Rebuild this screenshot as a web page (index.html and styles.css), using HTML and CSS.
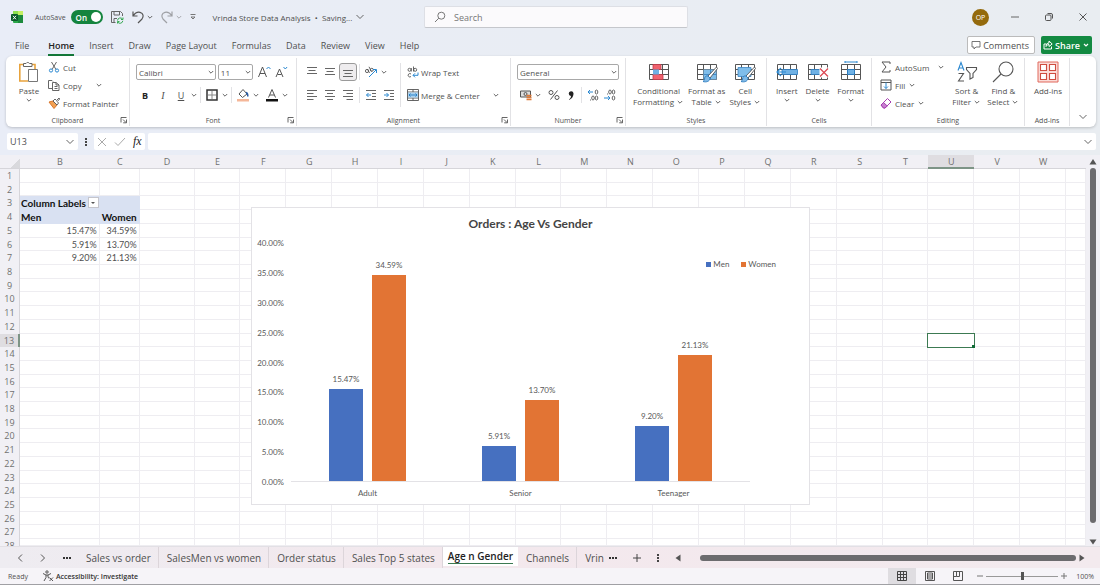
FILE: index.html
```html
<!DOCTYPE html>
<html lang="en">
<head>
  <meta charset="UTF-8" />
  <meta name="viewport" content="width=device-width, initial-scale=1.0"/>
  <title>Vrinda Store Data Analysis</title>
  <link rel="stylesheet" href="styles.css">
</head>
<body>
  <svg class="defs" aria-hidden="true">
    <symbol id="chev" viewBox="0 0 8 8"><path d="M1.8 3 4 5.2 6.2 3" fill="none" stroke="#666" stroke-width="1"/></symbol>
    <symbol id="chev-lg" viewBox="0 0 10 10"><path d="M1.5 3 5 6.5 8.5 3" fill="none" stroke="#666" stroke-width="1"/></symbol>
    <symbol id="launch" viewBox="0 0 8 8"><path d="M1 6.5V1.5H6.5M3 3.5 6 6.5M6.5 3.5V6.8H3.2" fill="none" stroke="#555" stroke-width=".9"/></symbol>
    <symbol id="tbl" viewBox="0 0 22 22"><path d="M1.5 3.5h19v15h-19zM1.5 8.5h19M1.5 13.5h19M7.5 3.5v15M14.5 3.5v15" fill="#fff" stroke="#555"/></symbol>
    <symbol id="brush" viewBox="0 0 22 22"><path d="M20.5 6 12 15l2 2 7.5-9.5z" fill="#fff" stroke="#555" stroke-width=".9"/><path d="M12 15c-2-.5-3.500 1-3.500 3 0 1.500-1 2-1.500 2.500 3 1 7 0 7-3.500z" fill="#7fb9e6" stroke="#2b7cc0" stroke-width=".9"/></symbol>
  </svg>

  <header class="titlebar">
    <div class="title-left">
      <svg class="logo" viewBox="0 0 12 12"><rect x="2" width="10" height="12" rx="1" fill="#2ba84a"/><path d="M2 0h5v4H2z" fill="#8be04e"/><path d="M7 0h5v4H7z" fill="#c3ef62"/><path d="M7 4h5v8H7z" fill="#1c8a3c"/><rect y="3" width="7" height="7" rx="1" fill="#0b5c2a"/><path d="m2 4.800 3 3.500M5 4.800 2 8.300" stroke="#fff" stroke-width="1"/></svg>
      <label class="autosave">AutoSave
        <span class="toggle"><input type="checkbox" checked><span>On</span></span>
      </label>
      <button class="tool" aria-label="Save"><svg width="14" height="14" viewBox="0 0 14 14"><path d="M12.500 6V3.500l-2-2h-9v11h4M4 1.500v3.500h5.500V1.500M4 12.500v-4h3" fill="none" stroke="#666"/><path d="M7.500 10.500a2.800 2.800 0 0 1 5-1.500M13 7.500v2h-2M12.800 10.800a2.800 2.800 0 0 1-5 1.400M7.500 13.500v-2h2" fill="none" stroke="#36a852"/></svg></button>
      <button class="tool undo" aria-label="Undo"><svg width="14" height="14" viewBox="0 0 14 14"><path d="M2 1.500V6h4.500M2.200 5.800C4 3 6.500 1.800 9 2.300c3.500.8 4 4.700 1.800 7L7 13" fill="none" stroke="#555" stroke-width="1.200"/></svg><svg width="8" height="8"><use href="#chev"/></svg></button>
      <button class="tool redo" aria-label="Redo"><svg width="14" height="14" viewBox="0 0 14 14"><path d="M12 1.500V6H7.500M11.800 5.800C10 3 7.500 1.800 5 2.300 1.500 3.100 1 7 3.200 9.300L7 13" fill="none" stroke="#555" stroke-width="1.200"/></svg><svg width="8" height="8"><use href="#chev"/></svg></button>
      <button class="tool more" aria-label="Customize toolbar"><svg width="8" height="8" viewBox="0 0 8 8"><path d="M1.500 1.500h5M2 4l2 2 2-2z" fill="none" stroke="#777"/></svg></button>
      <button class="doc-name">Vrinda Store Data Analysis &nbsp;•&nbsp; Saving... <svg width="10" height="10"><use href="#chev-lg"/></svg></button>
    </div>
    <label class="search">
      <svg width="12" height="12" viewBox="0 0 12 12"><circle cx="7.300" cy="4.700" r="3.500" fill="none" stroke="#777"/><path d="M4.800 7.200 1 11" stroke="#777"/></svg>
      <input type="search" placeholder="Search" aria-label="Search">
    </label>
    <div class="window-tools">
      <span class="avatar">OP</span>
      <button aria-label="Minimize"><svg width="10" height="10" viewBox="0 0 10 10"><path d="M1 5h8" stroke="#666"/></svg></button>
      <button aria-label="Restore"><svg width="10" height="10" viewBox="0 0 10 10"><rect x="1.500" y="3" width="5.500" height="5.500" rx="1" fill="none" stroke="#555"/><path d="M3.500 1.500H7q1.500 0 1.500 1.500v3.500" fill="none" stroke="#555"/></svg></button>
      <button aria-label="Close"><svg width="10" height="10" viewBox="0 0 10 10"><path d="m1.500 1.500 7 7M8.500 1.500l-7 7" stroke="#555"/></svg></button>
    </div>
  </header>

  <nav class="menu">
    <a href="#">File</a>
    <a href="#" class="current">Home</a>
    <a href="#">Insert</a>
    <a href="#">Draw</a>
    <a href="#">Page Layout</a>
    <a href="#">Formulas</a>
    <a href="#">Data</a>
    <a href="#">Review</a>
    <a href="#">View</a>
    <a href="#">Help</a>
    <div class="menu-actions">
      <button class="comments"><svg width="10" height="10" viewBox="0 0 10 10"><path d="M1 1.500h8v5.500H5L3 9V7H1z" fill="none" stroke="#666" stroke-width=".9"/></svg>Comments</button>
      <button class="share"><svg width="10" height="10" viewBox="0 0 10 10"><path d="M3.500 4H1v5h7.500V6.500M3 6.500C3 4 4.500 3 6 3V1l3.200 3L6 6.500v-2c-1.300 0-2.200.8-3 2z" fill="none" stroke="#fff"/></svg>Share<svg width="8" height="8" viewBox="0 0 8 8"><path d="M2 3l2 2 2-2" fill="none" stroke="#fff" stroke-width="1.200"/></svg></button>
    </div>
  </nav>

  <section class="ribbon">
    <div class="group">
      <div class="tools clip-tools">
        <button class="big paste">
          <svg width="22" height="22" viewBox="0 0 22 22"><path d="M5 3.500H1.800V20H10M14 3.500h3V8" fill="none" stroke="#e8a33d" stroke-width="1.600"/><path d="M5.500 5.500v-3H8a2 2 0 0 1 3.500 0H14v3z" fill="#fff" stroke="#666"/><path d="M10.500 8.500h9v12h-9z" fill="#fff" stroke="#777"/></svg>
          Paste<svg width="8" height="8"><use href="#chev"/></svg>
        </button>
        <div class="stack">
          <button><svg width="12" height="12" viewBox="0 0 12 12"><path d="M3.500 1 8 8.500M8.500 1 4 8.500" stroke="#555" stroke-width=".9"/><circle cx="3" cy="9.500" r="1.600" fill="none" stroke="#2b88d0"/><circle cx="9" cy="9.500" r="1.600" fill="none" stroke="#2b88d0"/></svg>Cut</button>
          <button><svg width="12" height="12" viewBox="0 0 12 12"><path d="M4 9.500H.5v-8H4l1 1" fill="none" stroke="#666"/><path d="M4.500 3.500H8l3 2.500v5.500H4.500zM8 3.500V6h3M6.500 7.500h3M6.500 9.500h3" fill="#fff" stroke="#555" stroke-width=".9"/></svg>Copy<svg class="far" width="8" height="8"><use href="#chev"/></svg></button>
          <button><svg width="12" height="12" viewBox="0 0 12 12"><path d="m1 5 4-1 4 4-3 3.500z" fill="#f2a154" stroke="#d9772b"/><path d="m5 4 2-2 1.500 1.500L11 1l.7 1-2.500 2.500L10.500 6 9 8z" fill="#fff" stroke="#555" stroke-width=".9"/></svg>Format Painter</button>
        </div>
      </div>
      <div class="group-name"><span>Clipboard</span><button aria-label="Clipboard settings"><svg width="8" height="8"><use href="#launch"/></svg></button></div>
    </div>

    <div class="group">
      <div class="tools rows">
        <div class="row">
          <span class="combo font-name"><select aria-label="Font"><option>Calibri</option></select><svg width="8" height="8"><use href="#chev"/></svg></span>
          <span class="combo font-size"><select aria-label="Font size"><option>11</option></select><svg width="8" height="8"><use href="#chev"/></svg></span>
          <button class="slot grow" aria-label="Increase font size"><svg width="14" height="14" viewBox="0 0 14 14"><path d="m1.500 12 4-10 4 10M3 8.500h5" fill="none" stroke="#555"/><path d="m9.500 4 2-2 2 2" fill="none" stroke="#2b88d0"/></svg></button>
          <button class="slot" aria-label="Decrease font size"><svg width="14" height="14" viewBox="0 0 14 14"><path d="m2 12 3.500-8L9 12M3.500 9.500h4" fill="none" stroke="#555"/><path d="m9.500 2 1.800 2 1.800-2" fill="none" stroke="#2b88d0"/></svg></button>
        </div>
        <div class="row">
          <button class="slot letter"><b>B</b></button>
          <button class="slot letter"><i>I</i></button>
          <button class="slot letter"><u>U</u></button>
          <button aria-label="Underline styles"><svg width="8" height="8"><use href="#chev"/></svg></button>
          <span class="rule"></span>
          <button class="slot" aria-label="Borders"><svg width="12" height="12" viewBox="0 0 12 12"><path d="M1 1h10v10H1z" fill="none" stroke="#333" stroke-width="1.500"/><path d="M6 2v8M2 6h8" stroke="#888"/></svg></button>
          <button aria-label="Border styles"><svg width="8" height="8"><use href="#chev"/></svg></button>
          <span class="rule"></span>
          <button class="slot" aria-label="Fill color"><svg width="12" height="14" viewBox="0 0 12 14"><path d="M6 1.500 10 6 5.500 9.500 2 6z" fill="#fff" stroke="#555"/><path d="M9 4.500q2 .5 1.800 4" fill="none" stroke="#2b5ea8" stroke-width="1.500"/><path d="M0 11h12v2.500H0z" fill="#f5b799"/></svg></button>
          <button aria-label="Fill colors"><svg width="8" height="8"><use href="#chev"/></svg></button>
          <button class="slot font-color" aria-label="Font color"><svg width="12" height="14" viewBox="0 0 12 14"><path d="M2.500 9.500 6 1.500l3.500 8M3.800 7h4.400" fill="none" stroke="#555"/><path d="M0 11h12v2.500H0z" fill="#111"/></svg></button>
          <button aria-label="Font colors"><svg width="8" height="8"><use href="#chev"/></svg></button>
        </div>
      </div>
      <div class="group-name"><span>Font</span><button aria-label="Font settings"><svg width="8" height="8"><use href="#launch"/></svg></button></div>
    </div>

    <div class="group">
      <div class="tools align-tools">
        <div class="rows">
          <div class="row">
            <button class="slot" aria-label="Top align"><svg width="12" height="12" viewBox="0 0 12 12"><path d="M1 1.500h10M2.500 4.500h7M1 7.500h10" stroke="#666"/></svg></button>
            <button class="slot" aria-label="Middle align"><svg width="12" height="12" viewBox="0 0 12 12"><path d="M1 2.500h10M2.500 5.500h7M1 8.500h10" stroke="#666"/></svg></button>
            <button class="slot pressed" aria-label="Bottom align"><svg width="12" height="12" viewBox="0 0 12 12"><path d="M2.500 7.500h7M1 4.500h10M1 10.500h10" stroke="#666"/></svg></button>
            <span class="rule"></span>
            <button class="slot" aria-label="Orientation"><svg width="14" height="12" viewBox="0 0 14 12"><g fill="none" stroke="#555" stroke-width=".9"><circle cx="3" cy="5" r="1.600"/><path d="M3.500 3 5.500 7M5 .8 7.500 5.500"/><circle cx="7.800" cy="3.800" r="1.500"/></g><path d="M5 11 12 4M9 3.500h3.500V7" fill="none" stroke="#2b88d0"/></svg></button>
            <button aria-label="Orientation options"><svg width="8" height="8"><use href="#chev"/></svg></button>
          </div>
          <div class="row">
            <button class="slot" aria-label="Align left"><svg width="12" height="12" viewBox="0 0 12 12"><path d="M1 1.500h10M1 4.500h6.500M1 7.500h10M1 10.500h6.500" stroke="#666"/></svg></button>
            <button class="slot" aria-label="Center"><svg width="12" height="12" viewBox="0 0 12 12"><path d="M1 1.500h10M3 4.500h6M1 7.500h10M3 10.500h6" stroke="#666"/></svg></button>
            <button class="slot" aria-label="Align right"><svg width="12" height="12" viewBox="0 0 12 12"><path d="M1 1.500h10M4.500 4.500H11M1 7.500h10M4.500 10.500H11" stroke="#666"/></svg></button>
            <span class="rule"></span>
            <button class="slot" aria-label="Decrease indent"><svg width="12" height="12" viewBox="0 0 12 12"><path d="M1 1.500h10M7 4.500h4M7 7.500h4M1 10.500h10" stroke="#666"/><path d="M6 6H1.500m2-2-2 2 2 2" fill="none" stroke="#2b88d0"/></svg></button>
            <button class="slot" aria-label="Increase indent"><svg width="12" height="12" viewBox="0 0 12 12"><path d="M1 1.500h10M7 4.500h4M7 7.500h4M1 10.500h10" stroke="#666"/><path d="M1 6h4.500m-2-2 2 2-2 2" fill="none" stroke="#2b88d0"/></svg></button>
          </div>
        </div>
        <span class="rule tall"></span>
        <div class="rows">
          <button class="row named"><svg width="12" height="12" viewBox="0 0 12 12"><g fill="none" stroke="#555" stroke-width=".9"><circle cx="2.500" cy="3.800" r="1.500"/><path d="M4.300 2v3.500M6.500.5v5"/><circle cx="8.200" cy="3.800" r="1.500"/><path d="M4 8a1.700 1.700 0 1 0 0 2.500"/></g><path d="M11 6.500v2.800H6m2-2-2 2 2 2" fill="none" stroke="#2b88d0"/></svg>Wrap Text</button>
          <button class="row named"><svg width="12" height="12" viewBox="0 0 12 12"><path d="M.5.5h11v11H.5zM.5 3h11M.5 9h11M6 .5V3M6 9v2.500" fill="#fff" stroke="#555" stroke-width=".9"/><path d="M1 3.500h10v5H1z" fill="#a9d3f2"/><path d="M2 6h8M3.500 4.500 2 6l1.500 1.500M8.500 4.500 10 6 8.500 7.500" fill="none" stroke="#1f78c1" stroke-width=".9"/></svg>Merge &amp; Center<svg class="far" width="8" height="8"><use href="#chev"/></svg></button>
        </div>
      </div>
      <div class="group-name"><span>Alignment</span><button aria-label="Alignment settings"><svg width="8" height="8"><use href="#launch"/></svg></button></div>
    </div>

    <div class="group">
      <div class="tools rows">
        <div class="row">
          <span class="combo format"><select aria-label="Number format"><option>General</option></select><svg width="8" height="8"><use href="#chev"/></svg></span>
        </div>
        <div class="row">
          <button class="slot" aria-label="Accounting format"><svg width="14" height="12" viewBox="0 0 14 12"><path d="M1.500 2h10v6h-10z" fill="#ddd" stroke="#555"/><circle cx="6.500" cy="5" r="1.500" fill="none" stroke="#555"/><path d="M7.500 6.500h5M7.500 8.500h5M7.500 10.500h5" stroke="#e07b39" stroke-width="1.400"/></svg></button>
          <button aria-label="Accounting formats"><svg width="8" height="8"><use href="#chev"/></svg></button>
          <button class="slot percent" aria-label="Percent style"><svg width="12" height="12" viewBox="0 0 12 12"><g fill="none" stroke="#555"><circle cx="3" cy="3.500" r="2"/><circle cx="9" cy="8.500" r="2"/><path d="M9.500 1.500 2.500 10.500"/></g></svg></button>
          <button class="slot" aria-label="Comma style"><svg width="12" height="12" viewBox="0 0 12 12"><path d="M4 10.500Q6 9.500 6 7a2.400 2.400 0 1 1 2.500-2.700Q8.800 9 4 11z" fill="#222"/></svg></button>
          <span class="rule"></span>
          <button class="slot" aria-label="Increase decimal"><svg width="12" height="12" viewBox="0 0 12 12"><path d="M6 3H1m2-2L1 3l2 2" fill="none" stroke="#2b88d0"/><g fill="none" stroke="#555" stroke-width=".9"><ellipse cx="9.500" cy="3" rx="1.300" ry="2"/><ellipse cx="6" cy="9" rx="1.300" ry="2"/><ellipse cx="9.500" cy="9" rx="1.300" ry="2"/><path d="M3 11h1"/></g></svg></button>
          <button class="slot" aria-label="Decrease decimal"><svg width="12" height="12" viewBox="0 0 12 12"><path d="M0 9h6M4 7l2 2-2 2" fill="none" stroke="#2b88d0"/><g fill="none" stroke="#555" stroke-width=".9"><ellipse cx="6" cy="3" rx="1.300" ry="2"/><ellipse cx="9.500" cy="3" rx="1.300" ry="2"/><ellipse cx="9.500" cy="9" rx="1.300" ry="2"/><path d="M3 5h1"/></g></svg></button>
        </div>
      </div>
      <div class="group-name"><span>Number</span><button aria-label="Number settings"><svg width="8" height="8"><use href="#launch"/></svg></button></div>
    </div>

    <div class="group">
      <div class="tools spread">
        <button class="big"><svg width="22" height="22" viewBox="0 0 22 22"><use href="#tbl"/><path d="M5 3.500h8v5H5zM5 13.500h10v5H5z" fill="#f0626e" stroke="#c23b49" stroke-width=".8"/><path d="M5 8.500h6v5H5z" fill="#6fb1e4"/></svg>Conditional<span>Formatting <svg width="8" height="8"><use href="#chev"/></svg></span></button>
        <button class="big"><svg width="22" height="22" viewBox="0 0 22 22"><use href="#tbl"/><path d="M7.500 8.500h13v10h-13z" fill="#7fbdea"/><path d="M7.500 13.500h13M14.500 8.500v10" stroke="#3c86c4" stroke-width=".9"/><use href="#brush"/></svg>Format as<span>Table <svg width="8" height="8"><use href="#chev"/></svg></span></button>
        <button class="big"><svg width="22" height="22" viewBox="0 0 22 22"><use href="#tbl"/><path d="M4 6.500h13v9H4z" fill="#7fbdea" stroke="#3c86c4" stroke-width=".8"/><use href="#brush"/></svg>Cell<span>Styles <svg width="8" height="8"><use href="#chev"/></svg></span></button>
      </div>
      <div class="group-name"><span>Styles</span></div>
    </div>

    <div class="group">
      <div class="tools spread">
        <button class="big"><svg width="22" height="22" viewBox="0 0 22 22"><use href="#tbl"/><path d="M6 8.500h15.500v5H6z" fill="#6fb1e4" stroke="#2b7cc0" stroke-width=".8"/><path d="M10 11H1M5 7l-4 4 4 4" fill="none" stroke="#2b88d0" stroke-width="1.200"/></svg>Insert<svg width="8" height="8"><use href="#chev"/></svg></button>
        <button class="big"><svg width="22" height="22" viewBox="0 0 22 22"><use href="#tbl"/><path d="M4 8.500h10v5H4z" fill="#6fb1e4" stroke="#2b7cc0" stroke-width=".8"/><path d="M12.500 6.500h9v10h-9z" fill="#fff"/><path d="m13 7.500 8 8M21 7.500l-8 8" stroke="#dc4650" stroke-width="1.200"/></svg>Delete<svg width="8" height="8"><use href="#chev"/></svg></button>
        <button class="big"><svg width="22" height="22" viewBox="0 0 22 22"><use href="#tbl"/><path d="M7.500 8.500h7v5h-7z" fill="#6fb1e4" stroke="#2b7cc0"/><path d="M5 1h12M5 0v2M17 0v2" stroke="#2b88d0"/></svg>Format<svg width="8" height="8"><use href="#chev"/></svg></button>
      </div>
      <div class="group-name"><span>Cells</span></div>
    </div>

    <div class="group">
      <div class="tools edit-tools">
        <div class="stack">
          <button><svg width="12" height="12" viewBox="0 0 12 12"><path d="M10 3V1H2l4 5-4 5h8V9" fill="none" stroke="#555"/></svg>AutoSum<svg class="far" width="8" height="8"><use href="#chev"/></svg></button>
          <button><svg width="12" height="12" viewBox="0 0 12 12"><path d="M1 1h10v10H1zM1 3.500h10" fill="none" stroke="#555"/><path d="M6 3.500v6M4 7.500l2 2 2-2" fill="none" stroke="#2b88d0"/></svg>Fill <svg width="8" height="8"><use href="#chev"/></svg></button>
          <button><svg width="12" height="12" viewBox="0 0 12 12"><path d="M1 8 7.500 1.500 11 5 5 11H3.500z" fill="#fff" stroke="#a63fb0"/><path d="m1 8 2.500-2.500L7.300 9 5 11H3.500z" fill="#c77fd0" stroke="#a63fb0"/></svg>Clear <svg width="8" height="8"><use href="#chev"/></svg></button>
        </div>
        <button class="big"><svg width="22" height="22" viewBox="0 0 22 22"><path d="m2 9.500 3-8 3 8M3 7h4" fill="none" stroke="#2b88d0" stroke-width="1.100"/><path d="M2.500 12.500h5L2.500 20h5.500" fill="none" stroke="#555" stroke-width="1.100"/><path d="M10.500 6.500h10v2L17 12.500v4l-3 1.500v-5.500l-3.500-4z" fill="none" stroke="#555" stroke-width="1.100"/></svg>Sort &amp;<span>Filter <svg width="8" height="8"><use href="#chev"/></svg></span></button>
        <button class="big"><svg width="22" height="22" viewBox="0 0 22 22"><circle cx="14" cy="8" r="7" fill="none" stroke="#555" stroke-width="1.100"/><path d="m9 13-8 8" stroke="#555" stroke-width="1.100"/></svg>Find &amp;<span>Select <svg width="8" height="8"><use href="#chev"/></svg></span></button>
      </div>
      <div class="group-name"><span>Editing</span></div>
    </div>

    <div class="group">
      <div class="tools spread">
        <button class="big"><svg width="22" height="22" viewBox="0 0 22 22"><path d="M1 1h20v20H1z" fill="#fbdcd8" stroke="#e0685c"/><path d="M3.500 3.500h6v6h-6zM12.500 3.500h6v6h-6zM3.500 12.500h6v6h-6zM12.500 12.500h6v6h-6z" fill="#fff" stroke="#cf4d40" stroke-width="1.100"/></svg>Add-ins</button>
      </div>
      <div class="group-name"><span>Add-ins</span></div>
    </div>
    <button class="collapse" aria-label="Collapse ribbon"><svg width="10" height="10"><use href="#chev-lg"/></svg></button>
  </section>

  <section class="formula-bar">
    <label class="name-box"><input type="text" value="U13" aria-label="Name box"><svg width="10" height="10"><use href="#chev-lg"/></svg></label>
    <svg width="4" height="12" viewBox="0 0 4 12"><path d="M1 2h2v2H1zM1 5h2v2H1zM1 8h2v2H1z" fill="#444"/></svg>
    <div class="fx">
      <button aria-label="Cancel"><svg width="10" height="10" viewBox="0 0 10 10"><path d="m1 1 8 8M9 1 1 9" stroke="#aaa"/></svg></button>
      <button aria-label="Enter"><svg width="12" height="10" viewBox="0 0 12 10"><path d="m1 5.500 3 3L11 1" fill="none" stroke="#aaa"/></svg></button>
      <button class="fn">fx</button>
    </div>
    <label class="formula"><input type="text" aria-label="Formula"><svg width="10" height="10"><use href="#chev-lg"/></svg></label>
  </section>

  <main class="sheet">
    <div class="canvas">
      <table id="grid"></table>
      <figure class="chart">
        <figcaption>Orders : Age Vs Gender</figcaption>
        <div class="plot">
          <div class="axis" id="axis"></div>
          <div class="bars" id="bars"></div>
        </div>
        <div class="categories" id="categories"></div>
        <div class="legend"><span class="men">Men</span><span class="women">Women</span></div>
      </figure>
    </div>
    <div class="vscroll">
      <svg width="8" height="8" viewBox="0 0 8 8"><path d="M4 1 7.500 6.500H.5z" fill="#555"/></svg>
      <span class="thumb"></span>
      <svg width="8" height="8" viewBox="0 0 8 8"><path d="M4 6.500 7.500 1.500H.5z" fill="#555"/></svg>
    </div>
  </main>

  <nav class="sheets">
    <div class="sheet-nav">
      <button aria-label="Previous sheet"><svg width="8" height="10" viewBox="0 0 8 10"><path d="M6 1.500 2.500 5 6 8.500" fill="none" stroke="#555"/></svg></button>
      <button aria-label="Next sheet"><svg width="8" height="10" viewBox="0 0 8 10"><path d="M2 1.500 5.500 5 2 8.500" fill="none" stroke="#555"/></svg></button>
      <button aria-label="More sheets"><svg width="10" height="4" viewBox="0 0 10 4"><path d="M1 1h2v2H1zM4 1h2v2H4zM7 1h2v2H7z" fill="#333"/></svg></button>
    </div>
    <div class="sheet-tabs">
      <button>Sales vs order</button>
      <button>SalesMen vs women</button>
      <button>Order status</button>
      <button>Sales Top 5 states</button>
      <button class="active"><span>Age n Gender</span></button>
      <button>Channels</button>
      <button class="last">Vrin</button>
    </div>
    <div class="sheet-more">
      <button aria-label="Hidden sheets"><svg width="10" height="4" viewBox="0 0 10 4"><path d="M1 1h2v2H1zM4 1h2v2H4zM7 1h2v2H7z" fill="#333"/></svg></button>
      <button aria-label="New sheet"><svg width="10" height="10" viewBox="0 0 10 10"><path d="M5 1v8M1 5h8" stroke="#444"/></svg></button>
      <svg width="4" height="10" viewBox="0 0 4 10"><path d="M1 1h2v2H1zM1 4h2v2H1zM1 7h2v2H1z" fill="#444"/></svg>
    </div>
    <div class="hscroll">
      <svg width="8" height="8" viewBox="0 0 8 8"><path d="M1.500 4 6.500.5v7z" fill="#555"/></svg>
      <span class="thumb"></span>
      <svg width="8" height="8" viewBox="0 0 8 8"><path d="M6.500 4 1.500.5v7z" fill="#555"/></svg>
    </div>
  </nav>

  <footer class="status">
    <span>Ready</span>
    <button class="access"><svg width="12" height="12" viewBox="0 0 12 12"><g fill="none" stroke="#444" stroke-width=".9"><circle cx="5" cy="2" r="1.200"/><path d="M1 3.500 4 5v2.500L2 11M9 3.500 6 5v2L7 8.500M4 5h2M7.500 7.500l3.500 3.500M11 7.500 7.500 11"/></g></svg>Accessibility: Investigate</button>
    <div class="views">
      <button class="active" aria-label="Normal view"><svg width="10" height="10" viewBox="0 0 10 10"><path d="M.5.5h9v9h-9zM.5 3.500h9M.5 6.500h9M3.500.5v9M6.500.5v9" fill="none" stroke="#444"/></svg></button>
      <button aria-label="Page layout view"><svg width="10" height="10" viewBox="0 0 10 10"><path d="M.5.5h9v9h-9zM2.500 2h5v6h-5zM3 4h4M3 6h4" fill="none" stroke="#555"/></svg></button>
      <button aria-label="Page break view"><svg width="10" height="10" viewBox="0 0 10 10"><path d="M.5.5h9v9h-9zM3.500.5v5h3v-5M.5 5.500h3" fill="none" stroke="#555"/></svg></button>
    </div>
    <div class="zoom">
      <button aria-label="Zoom out"><svg width="8" height="8" viewBox="0 0 8 8"><path d="M1 4h6" stroke="#777"/></svg></button>
      <input type="range" min="0" max="100" value="50" aria-label="Zoom">
      <button aria-label="Zoom in"><svg width="8" height="8" viewBox="0 0 8 8"><path d="M1 4h6M4 1v6" stroke="#777"/></svg></button>
    </div>
    <span class="zoom-value">100%</span>
  </footer>

  <script>
    const columns = "BCDEFGHIJKLMNOPQRSTUVW".split("").concat("");
    const rowCount = 28;
    const selected = "U13";

    const cells = {
      B3: "Column Labels", B4: "Men", C4: "Women",
      B5: "15.47%", C5: "34.59%",
      B6: "5.91%", C6: "13.70%",
      B7: "9.20%", C7: "21.13%"
    };

    const orders = [
      { age: "Adult", men: 15.47, women: 34.59 },
      { age: "Senior", men: 5.91, women: 13.70 },
      { age: "Teenager", men: 9.20, women: 21.13 }
    ];
    const axisMax = 40;

    function cellClass(name, row) {
      const list = [];
      if ((row === 3 || row === 4) && (name[0] === "B" || name[0] === "C")) list.push("pivot-head");
      if (cells[name] && (row > 4 || name === "C4")) list.push("right");
      if (name === selected) list.push("selected");
      return list.join(" ");
    }

    function drawGrid() {
      let html = `<thead><tr><th class="corner"></th>`;
      columns.forEach(col => {
        html += `<th class="${col === "U" ? "on" : ""}">${col}</th>`;
      });
      html += "</tr></thead><tbody>";
      for (let row = 1; row <= rowCount; row++) {
        html += `<tr><th class="${row === 13 ? "on" : ""}">${row}</th>`;
        columns.forEach(col => {
          const name = col + row;
          const filter = name === "B3" ? `<button class="filter" aria-label="Filter columns"></button>` : "";
          html += `<td class="${cellClass(name, row)}">${filter}${cells[name] || ""}</td>`;
        });
        html += "</tr>";
      }
      document.getElementById("grid").innerHTML = html + "</tbody>";
    }

    function drawChart() {
      let axis = "";
      for (let v = axisMax; v >= 0; v -= 5) {
        axis += `<span>${v.toFixed(2)}%</span>`;
      }
      document.getElementById("axis").innerHTML = axis;
      document.getElementById("bars").innerHTML = orders.map(o => `
        <div class="pair">
          <div class="bar men" style="height:${o.men / axisMax * 100}%"><span>${o.men.toFixed(2)}%</span></div>
          <div class="bar women" style="height:${o.women / axisMax * 100}%"><span>${o.women.toFixed(2)}%</span></div>
        </div>`).join("");
      document.getElementById("categories").innerHTML = orders.map(o => `<span>${o.age}</span>`).join("");
    }

    drawGrid();
    drawChart();
  </script>
</body>
</html>
```
FILE: styles.css
```css
* {
  box-sizing: border-box;
}
body {
  margin: 0;
  height: 100vh;
  display: flex;
  flex-direction: column;
  overflow: hidden;
  background: linear-gradient(to right, #e9edf7, #e9edf1);
  font-family: "Open Sans", "Noto Sans", sans-serif;
  font-size: 8px;
  color: #505050;
}
button, input, select {
  font: inherit;
  color: inherit;
  background: none;
  border: none;
  padding: 0;
  margin: 0;
  min-width: 0;
}
button {
  display: flex;
  align-items: center;
  justify-content: center;
  white-space: nowrap;
}
input:focus {
  outline: none;
}
svg {
  flex: none;
}
.defs {
  position: absolute;
  width: 0;
  height: 0;
}

/* title bar */
.titlebar {
  display: grid;
  grid-template-columns: 424fr 264fr 412fr;
  align-items: center;
  height: 34px;
}
.title-left {
  display: flex;
  align-items: center;
  padding-left: 11px;
}
.logo {
  width: 12px;
  height: 12px;
  margin-right: 12px;
}
.autosave {
  display: flex;
  align-items: center;
  gap: 5px;
  font-size: 7px;
}
.toggle {
  display: grid;
  align-items: center;
  width: 32px;
  height: 14px;
  border-radius: 7px;
  background: #14843e;
  color: #fff;
  font-size: 8px;
  font-weight: 600;
}
.toggle input, .toggle span {
  grid-area: 1 / 1;
}
.toggle span {
  padding-left: 5px;
}
.toggle input {
  appearance: none;
  justify-self: end;
  width: 10px;
  height: 10px;
  margin-right: 2px;
  border-radius: 50%;
  background: #fff;
}
.tool {
  margin-left: 7px;
}
.tool.undo, .tool.redo {
  gap: 1px;
}
.tool.redo {
  margin-left: 6px;
  opacity: 0.5;
}
.tool.more {
  margin-left: 6px;
}
.doc-name {
  margin-left: 16px;
  gap: 3px;
}
.search {
  display: flex;
  align-items: center;
  gap: 8px;
  height: 22px;
  padding: 0 9px;
  background: #fbfafc;
  border: 1px solid #dddfe5;
  border-bottom-color: #c5c7cc;
  border-radius: 2px;
}
.search input {
  flex: 1;
  font-size: 9px;
}
.search input::placeholder {
  color: #777;
}
.window-tools {
  display: flex;
  align-items: center;
  justify-content: flex-end;
  gap: 24px;
  padding-right: 12px;
}
.avatar {
  width: 17px;
  height: 17px;
  margin-right: -3px;
  border-radius: 50%;
  background: #946a0c;
  color: #fff;
  font-size: 7px;
  line-height: 17px;
  text-align: center;
}

/* menu tabs */
.menu {
  display: flex;
  align-items: center;
  gap: 15px;
  height: 22px;
  padding: 0 8px 0 15px;
  font-size: 9px;
}
.menu a {
  line-height: 16px;
  margin-top: 4px;
  color: inherit;
  text-decoration: none;
  border-bottom: 2px solid transparent;
}
.menu a:first-child {
  margin-right: 4px;
}
.menu a.current {
  color: #222;
  font-weight: 600;
  border-color: #14793a;
}
.menu-actions {
  display: flex;
  gap: 6px;
  margin-left: auto;
}
.menu-actions button {
  height: 18px;
  gap: 2px;
  border-radius: 2px;
}
.comments {
  padding: 0 5px 0 3px;
  background: #fff;
  border: 1px solid #bbb;
}
.share {
  padding: 0 2px;
  background: #138a42;
  color: #fff;
  font-weight: 600;
}

/* ribbon */
.ribbon {
  display: grid;
  grid-template-columns: 124fr 167fr 214fr 115fr 141fr 105fr 153fr 45fr 26fr;
  height: 71px;
  margin: 0 4px 0 6px;
  padding: 2px 0 1px;
  background: #fff;
  border-radius: 6px;
  box-shadow: 0 1px 3px rgba(0, 0, 0, 0.2);
}
.group {
  display: flex;
  flex-direction: column;
  min-width: 0;
  border-right: 1px solid #e2e2e5;
}
.tools {
  display: flex;
  flex: 1;
  padding: 0 6px;
}
.group-name {
  display: grid;
  grid-template-columns: 1fr auto 1fr;
  align-items: center;
  height: 12px;
  padding: 0 1px;
  font-size: 7px;
  white-space: nowrap;
}
.group-name span {
  grid-column: 2;
}
.group-name button {
  justify-self: end;
}
.big {
  flex-direction: column;
  justify-content: flex-start;
  line-height: 11px;
  padding-top: 3px;
}
.big > svg:first-child {
  margin-bottom: 2px;
}
.big span {
  display: flex;
  align-items: center;
  gap: 2px;
}
.spread {
  justify-content: space-around;
  padding: 0 3px 0 5px;
}
.stack {
  display: flex;
  flex-direction: column;
}
.stack button {
  justify-content: flex-start;
  gap: 3px;
  height: 18px;
}
.far {
  margin-left: 10px;
}
.clip-tools {
  gap: 8px;
  padding-left: 12px;
}
.rows {
  display: flex;
  flex-direction: column;
  padding-top: 5px;
  gap: 5px;
}
.tools.rows {
  padding-top: 5px;
}
.row {
  display: flex;
  align-items: center;
  height: 18px;
}
.slot {
  width: 18px;
  height: 18px;
}
.slot.pressed {
  background: #eeecee;
  border: 1px solid #9a9a9a;
  border-radius: 3px;
}
.slot.grow {
  margin-left: 2px;
}
.slot.font-color {
  margin-left: 3px;
}
.letter {
  font-size: 9px;
}
.letter b {
  color: #222;
}
.letter i {
  font-family: "Liberation Serif", serif;
  font-size: 10px;
}
.rule {
  width: 1px;
  height: 16px;
  margin: 0 2px;
  background: #e2e2e5;
}
.rule.tall {
  height: 44px;
  margin: 5px 6px 0 2px;
}
.combo {
  display: grid;
  align-items: center;
  height: 16px;
  border: 1px solid #a8a8a8;
  border-radius: 2px;
}
.combo select, .combo svg {
  grid-area: 1 / 1;
}
.combo select {
  appearance: none;
  width: 100%;
  padding-left: 2px;
}
.combo svg {
  justify-self: end;
  pointer-events: none;
}
.font-name {
  width: 82px;
  margin-right: 2px;
}
.font-size {
  width: 36px;
}
.format {
  width: 100%;
}
.percent {
  margin-left: 3px;
}
.named {
  gap: 2px;
  justify-content: flex-start;
}
.edit-tools {
  padding-left: 8px;
  gap: 9px;
}
.edit-tools .stack {
  width: 71px;
}
.edit-tools .far {
  margin-left: auto;
}
.collapse {
  align-self: end;
  padding-bottom: 4px;
}

/* formula bar */
.formula-bar {
  display: flex;
  align-items: center;
  gap: 6px;
  height: 17px;
  margin: 6px 4px 5px 7px;
}
.name-box, .fx, .formula {
  display: flex;
  align-items: center;
  height: 17px;
  padding: 0 3px;
  background: #fff;
  border-radius: 2px;
}
.name-box {
  width: 71px;
  font-size: 9px;
}
.name-box input, .formula input {
  flex: 1;
}
.fx {
  gap: 7px;
}
.fx .fn {
  color: #222;
  font-family: "Liberation Serif", serif;
  font-size: 12px;
  font-style: italic;
}
.formula {
  flex: 1;
  margin-left: -3px;
}

/* sheet */
.sheet {
  display: flex;
  flex: 1;
  min-height: 0;
  background: #f1f0f5;
}
.canvas {
  position: relative;
  flex: 1;
  min-width: 0;
  overflow: hidden;
}
#grid {
  display: grid;
  grid-template-columns: 20px 80fr 40fr 55fr repeat(19, 46fr) 20fr;
  grid-template-rows: 14px repeat(27, minmax(0, 2fr)) minmax(0, 1fr);
  height: 100%;
  font-family: Lato, sans-serif;
  font-size: 9px;
}
#grid thead, #grid tbody, #grid tr {
  display: contents;
}
#grid th, #grid td {
  min-width: 0;
  padding: 0 2px;
  overflow: hidden;
  line-height: 14px;
  white-space: nowrap;
}
#grid th {
  font-family: "Open Sans", sans-serif;
  font-weight: normal;
  color: #707070;
  background: #f1f0f5;
}
#grid thead th {
  border-bottom: 1px solid #d6d5da;
}
#grid thead th.on {
  background: #dfdde1;
  border-bottom: 2px solid #7d9486;
}
#grid tbody th {
  border-right: 1px solid #d6d5da;
}
#grid tbody th.on {
  background: #dfdde1;
  border-right: 2px solid #7d9486;
}
#grid .corner {
  background: linear-gradient(135deg, #f1f0f5 70%, #d9d9dd 70%);
}
#grid td {
  background: #fff;
  border-right: 1px solid #eeedf1;
  border-bottom: 1px solid #eeedf1;
}
#grid td.right {
  text-align: right;
}
#grid td.pivot-head {
  padding-left: 1px;
  background: #d9e1f2;
  border-color: #d9e1f2;
  color: #111;
  font-size: 10px;
  font-weight: bold;
}
#grid td.selected {
  position: relative;
  overflow: visible;
  border: none;
  outline: 1px solid #3c7a52;
}
#grid td.selected::after {
  content: "";
  position: absolute;
  right: -1px;
  bottom: -1px;
  width: 3px;
  height: 3px;
  background: #0f6b35;
}
.filter {
  float: right;
  width: 11px;
  height: 11px;
  margin: 1px -2px 0 0;
  background: #fff;
  border: 1px solid #c5c5cc;
}
.filter::after {
  content: "";
  border: 2px solid transparent;
  border-top-color: #555;
  border-bottom: none;
}

/* chart */
.chart {
  position: absolute;
  left: 251px;
  top: 52px;
  width: 559px;
  height: 298px;
  margin: 0;
  padding: 8px 59px 0 4px;
  display: flex;
  flex-direction: column;
  background: #fff;
  border: 1px solid #e3e2e6;
  font-family: Lato, sans-serif;
  font-size: 8px;
  color: #595959;
}
.chart figcaption {
  height: 27px;
  margin-right: -55px;
  font-size: 12px;
  font-weight: bold;
  line-height: 16px;
  text-align: center;
  color: #444;
}
.plot {
  display: flex;
  gap: 7px;
  height: 239px;
}
.axis {
  display: flex;
  flex-direction: column;
  justify-content: space-between;
  width: 28px;
  margin: -5px 0;
  line-height: 10px;
  text-align: right;
}
.bars {
  display: flex;
  flex: 1;
  border-bottom: 1px solid #e3e2e6;
}
.pair {
  display: flex;
  flex: 1;
  align-items: flex-end;
  justify-content: center;
  gap: 9px;
}
.bar {
  width: 34px;
  text-align: center;
}
.bar span {
  display: block;
  margin: -15px -5px 0;
  line-height: 10px;
}
.bar.men, .legend .men::before {
  background: #4670c0;
}
.bar.women, .legend .women::before {
  background: #e27434;
}
.categories {
  display: flex;
  margin: 6px 0 0 35px;
  line-height: 11px;
}
.categories span {
  flex: 1;
  text-align: center;
}
.legend {
  position: absolute;
  top: 51px;
  right: 33px;
  display: flex;
  gap: 12px;
  line-height: 10px;
}
.legend span {
  display: flex;
  align-items: center;
  gap: 2px;
}
.legend span::before {
  content: "";
  width: 5px;
  height: 5px;
}

/* scroll bars */
.vscroll {
  display: flex;
  flex-direction: column;
  align-items: center;
  gap: 2px;
  width: 14px;
  padding: 3px 0 0;
}
.vscroll .thumb {
  width: 6px;
  flex: 1;
  margin-bottom: 13px;
}
.thumb {
  background: #6c6b6e;
  border-radius: 3px;
}
.hscroll {
  display: flex;
  align-items: center;
  flex: 1;
}
.hscroll .thumb {
  flex: 1;
  height: 6px;
  margin: 0 2px 0 18px;
}

/* sheet tabs */
.sheets {
  display: flex;
  height: 22px;
  padding-right: 14px;
  background: linear-gradient(to right, #eeecf1, #f3e8ed 40%, #f3eaee);
  border-top: 1px solid #e2e0e5;
}
.sheet-nav {
  display: flex;
  gap: 15px;
  width: 78px;
  padding-left: 16px;
}
.sheet-tabs {
  display: flex;
  flex: none;
  font-size: 10px;
}
.sheet-tabs button {
  padding: 0 7px 0 8px;
  border-right: 1px solid #dcd5da;
}
.sheet-tabs .active {
  padding: 0 5px;
  margin-bottom: 2px;
  background: #fff;
  border: none;
  color: #222;
  font-weight: 600;
}
.active span {
  line-height: 14px;
  border-bottom: 1px solid #3c7a52;
}
.sheet-tabs .last {
  padding: 0 0 0 8px;
  border: none;
}
.sheet-more {
  display: flex;
  align-items: center;
  gap: 14px;
  padding: 0 14px 0 4px;
}

/* status bar */
.status {
  display: flex;
  align-items: center;
  height: 17px;
  padding: 0 6px 0 8px;
  background: #f6f4f8;
  border-bottom: 1px solid #a0a0a4;
  font-size: 7px;
}
.access {
  gap: 2px;
  margin-left: 14px;
  color: #333;
  font-weight: 600;
}
.views {
  display: flex;
  align-self: stretch;
  margin-left: auto;
}
.views button {
  width: 28px;
}
.views button.active {
  background: #dfdde1;
}
.zoom {
  display: flex;
  align-items: center;
  gap: 2px;
  margin: 0 8px 0 4px;
}
.zoom input {
  appearance: none;
  width: 72px;
  height: 10px;
  background: linear-gradient(#999, #999) center / 100% 1px no-repeat;
}
.zoom input::-webkit-slider-thumb {
  appearance: none;
  width: 3px;
  height: 8px;
  background: #555;
}
```
